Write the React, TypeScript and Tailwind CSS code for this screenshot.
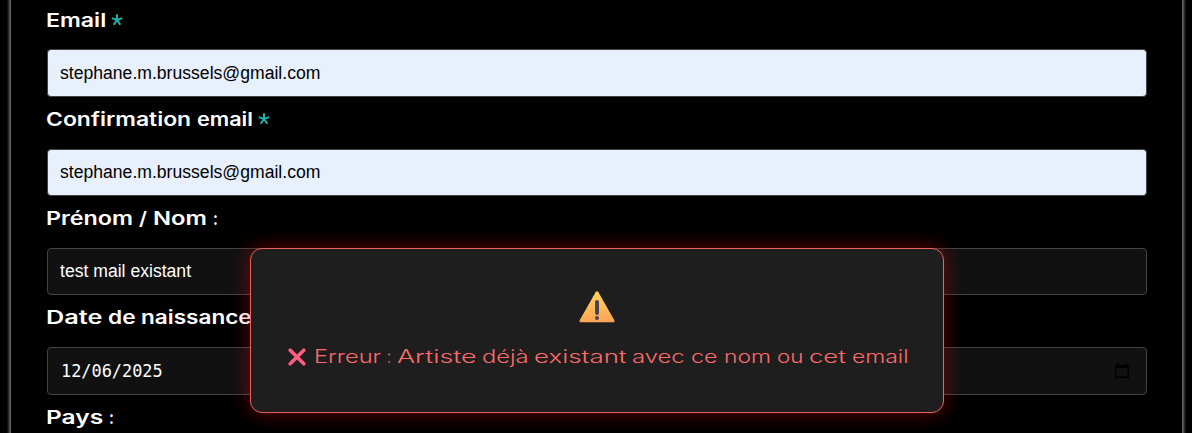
import { useLayoutEffect, useRef, useState } from "react";
import clsx from "clsx";

/** A word drawn extended: its glyphs are widened to fill the cell. */
function WideWord({ text, className }: { text: string; className: string }) {
  const ref = useRef<HTMLSpanElement>(null);
  const [scale, setScale] = useState(1);
  useLayoutEffect(() => {
    const el = ref.current;
    if (el && el.parentElement) setScale(el.parentElement.clientWidth / el.offsetWidth);
  }, [text]);
  return (
    <span className={clsx("flex shrink-0", className)}>
      <span ref={ref} className="shrink-0 origin-left whitespace-pre" style={{ transform: `scaleX(${scale})` }}>
        {text}
      </span>
    </span>
  );
}

type Word = [string, string];

function Label({ words, required }: { words: Word[]; required?: boolean }) {
  return (
    <div className="-ml-px flex h-6 gap-[6px] font-['Inter',sans-serif] text-[18.5px] leading-6 font-semibold text-white">
      {words.map(([t, w]) => (
        <WideWord key={t} text={t} className={w} />
      ))}
      {required && (
        <svg viewBox="0 0 12 12" className="mt-[6px] -ml-[1px] h-3 w-3 fill-none stroke-[#20b2aa] stroke-2">
          <path d="M6 0.3V6M0.8 4.1L6 6L11.2 4.1M6 6L2.7 10.8M6 6L9.3 10.8" />
        </svg>
      )}
    </div>
  );
}

const field = "flex items-center rounded-[4px] border px-3 font-['Liberation_Sans',sans-serif] text-[17.6px]";
const filled = "border-[#444] bg-[#e8f0fe] text-black";
const dark = "border-[#444] bg-[#111] text-white";

const message: Word[] = [
  ["Erreur", "w-[67px]"],
  [":", "w-[4px]"],
  ["Artiste", "w-[79px]"],
  ["déjà", "w-[46px]"],
  ["existant", "w-[92px]"],
  ["avec", "w-[53px]"],
  ["ce", "w-[27px]"],
  ["nom", "w-[47px]"],
  ["ou", "w-[26px]"],
  ["cet", "w-[37px]"],
  ["email", "w-[56px]"],
];

export default function App() {
  return (
    <div className="relative flex h-[433px] w-full overflow-hidden bg-black">
      <div className="ml-[6px] w-[5px] bg-linear-to-r from-black to-[#777]" />
      <main className="flex flex-1 flex-col pt-[8px] pr-[35px] pl-[36px]">
        <Label words={[["Email", "w-[60px]"]]} required />
        <div className={clsx(field, filled, "mt-[17px] h-12")}>stephane.m.brussels@gmail.com</div>
        <div className="mt-[10px]">
          <Label words={[["Confirmation", "w-[145px]"], ["email", "w-[56px]"]]} required />
        </div>
        <div className={clsx(field, filled, "mt-[18px] h-[47px]")}>stephane.m.brussels@gmail.com</div>
        <div className="mt-[10px]">
          <Label words={[["Prénom", "w-[87px]"], ["/", "w-[8px]"], ["Nom", "w-[54px]"], [":", "w-[5px]"]]} />
        </div>
        <div className={clsx(field, dark, "mt-[18px] h-[47px]")}>test mail existant</div>
        <div className="mt-[10px]">
          <Label words={[["Date", "w-[56px]"], ["de", "w-[27px]"], ["naissance", "w-[111px]"], [":", "w-[5px]"]]} />
        </div>
        <div className={clsx(field, dark, "mt-[18px] h-12 justify-between")}>
          <span className="pt-[2px] pl-px font-['DejaVu_Sans_Mono',monospace] text-[16.9px]">12/06/2025</span>
          <svg viewBox="0 0 14 16" className="mr-[5px] h-4 w-[14px]">
            <path className="fill-black" d="M2 0h2v2h6V0h2v2h1q1 0 1 1v11q0 1-1 1H1q-1 0-1-1V3q0-1 1-1h1zM1.4 5v8.6h11.2V5z" />
          </svg>
        </div>
        <div className="mt-[10px]">
          <Label words={[["Pays", "w-[57px]"], [":", "w-[5px]"]]} />
        </div>
      </main>
      <div className="mr-[5px] w-[5px] bg-linear-to-l from-black to-[#777]" />

      <div
        role="alert"
        className="absolute top-[248px] left-[249.5px] flex h-[165px] w-[694px] flex-col items-center rounded-[12px] border border-[#e86262] bg-[#1e1e1e] pt-[42px] shadow-[0_0_20px_rgba(255,0,0,0.4)]"
      >
        <svg viewBox="0 0 36 32" className="h-8 w-9">
          <defs>
            <linearGradient id="sign" x1="0" y1="0" x2="0" y2="1">
              <stop offset="0" stopColor="#ffd45e" />
              <stop offset="1" stopColor="#ffa456" />
            </linearGradient>
          </defs>
          <path fill="url(#sign)" d="M16.6 1.3Q18 -.7 19.4 1.3L35.2 29Q36 31.3 34 31.3H2Q0 31.3 .8 29Z" />
          <rect x="16" y="9" width="4" height="15" rx="2" className="fill-[#4b4453]" />
          <circle cx="18" cy="27" r="2" className="fill-[#4b4453]" />
        </svg>
        <p className="mt-[22px] flex h-6 gap-[6px] pl-[2px] font-['Inter',sans-serif] text-[18px] leading-6 font-light text-[#ff6b6b]">
          <svg viewBox="0 0 18 18" className="mt-[3px] mr-[2px] h-[18px] w-[18px] shrink-0 fill-none stroke-[#ff5c7f] stroke-[3.6]">
            <path strokeLinecap="round" d="M2.2 2.2L15.8 15.8M15.8 2.2L2.2 15.8" />
          </svg>
          {message.map(([t, w]) => (
            <WideWord key={t} text={t} className={w} />
          ))}
        </p>
      </div>
    </div>
  );
}
